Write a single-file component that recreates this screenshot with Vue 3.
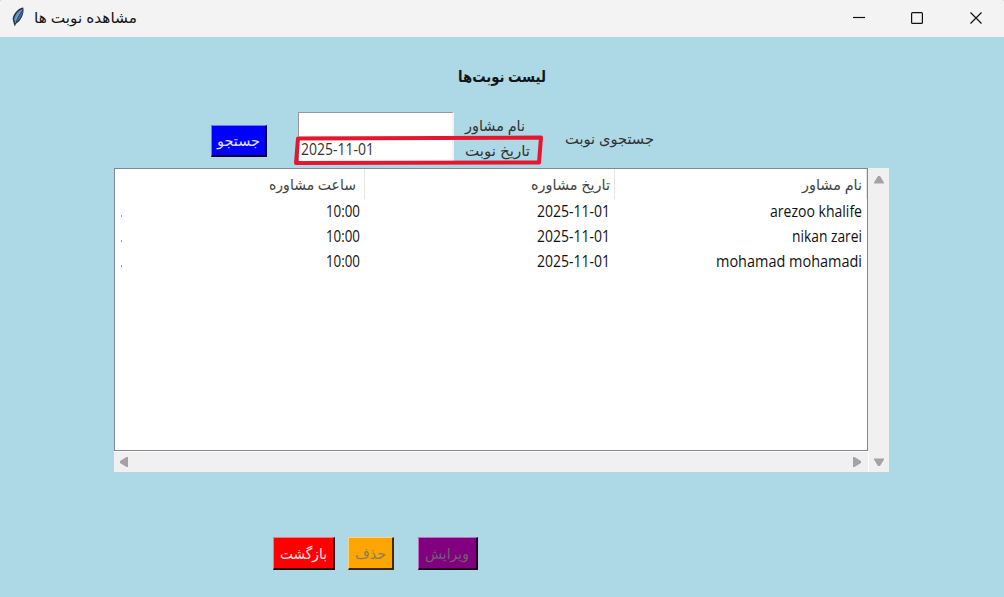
<script setup>
import { h } from 'vue'

// Single-line label fitted to a fixed advance width.
const FitText = (props) =>
  h('svg', { class: ['fit', { latin: props.ltr }], width: props.w, height: 24 }, [
    h('text', {
      x: props.w / 2,
      y: 17,
      'text-anchor': 'middle',
      textLength: props.w,
      lengthAdjust: 'spacingAndGlyphs',
      direction: props.ltr ? 'ltr' : 'rtl'
    }, props.t)
  ])
FitText.props = { t: String, w: Number, ltr: Boolean }

const rows = [
  { time: '10:00', date: '2025-11-01', name: 'arezoo khalife', w: 92 },
  { time: '10:00', date: '2025-11-01', name: 'nikan zarei', w: 70 },
  { time: '10:00', date: '2025-11-01', name: 'mohamad mohamadi', w: 146 }
]
</script>

<template>
  <div class="window">
    <header class="titlebar">
      <svg class="feather" width="14" height="22" viewBox="0 0 14 22">
        <path d="M12.300 .5C8 1 3 5.500 1.600 11.500L2.600 16L3.800 19.500L5 16.700C10 14 13.500 7 12.300 .5Z" fill="#26343f" />
        <path d="M10.800 2.300C7 4 3.800 8 3 12.500L4.200 14.500C6 11 8 7 10.800 2.300Z" fill="#5a93d0" />
        <path d="M11.800 3C11.900 8 9 12.500 5.500 15C6.500 11 9 7 11.800 3Z" fill="#3568a8" />
        <path d="M11.300 2.500C7.500 7 5 12 4.200 16" fill="none" stroke="#a9c8e4" stroke-width=".6" />
      </svg>
      <FitText class="caption" t="مشاهده نوبت ها" :w="103" />
      <svg class="controls" width="140" height="37" viewBox="0 0 140 37" fill="none" stroke="#111" stroke-width="1.200">
        <path d="M1 17.500H13" />
        <rect x="59.600" y="12.600" width="10.800" height="10.800" rx="1" />
        <path d="M118.500 12.500L129.500 23.500M129.500 12.500L118.500 23.500" />
      </svg>
    </header>

    <h1 class="heading"><FitText t="لیست نوبت‌ها" :w="88" /></h1>

    <section class="search">
      <button class="btn blue"><FitText t="جستجو" :w="43" /></button>
      <div class="entries">
        <div class="entry"></div>
        <div class="entry"><FitText t="2025-11-01" :w="73" ltr /></div>
      </div>
      <div class="labels">
        <FitText t="نام مشاور" :w="60" />
        <FitText t="تاریخ نوبت" :w="65" />
      </div>
      <FitText class="search-title" t="جستجوی نوبت" :w="89" />
      <svg class="mark" width="252" height="34" viewBox="0 0 252 34">
        <path d="M6 6.500L249 5.500L247 30.500L4 31Z" fill="none" stroke="#e5172f" stroke-width="4" stroke-linejoin="round" />
      </svg>
    </section>

    <section class="table-frame">
      <div class="table">
        <div class="row head">
          <div class="cell c1"><FitText t="ساعت مشاوره" :w="87" /></div>
          <div class="cell"><FitText t="تاریخ مشاوره" :w="79" /></div>
          <div class="cell"><FitText t="نام مشاور" :w="60" /></div>
        </div>
        <div v-for="r in rows" :key="r.name" class="row">
          <div class="cell"><i class="speck"></i><FitText :t="r.time" :w="34" ltr /></div>
          <div class="cell"><FitText :t="r.date" :w="73" ltr /></div>
          <div class="cell"><FitText :t="r.name" :w="r.w" ltr /></div>
        </div>
      </div>
      <div class="bar vertical">
        <svg width="12" height="10"><path d="M5 1H7L11 7.500V8.500H1V7.500Z" fill="#a3a3a3" /></svg>
        <svg width="12" height="10"><path d="M5 9H7L11 2.500V1.500H1V2.500Z" fill="#a3a3a3" /></svg>
      </div>
      <div class="bar horizontal">
        <svg width="10" height="12"><path d="M1 5V7L7.500 11H9V1H7.500Z" fill="#a3a3a3" /></svg>
        <svg width="10" height="12"><path d="M9 5V7L2.500 11H1V1H2.500Z" fill="#a3a3a3" /></svg>
      </div>
      <div class="corner"></div>
    </section>

    <footer class="actions">
      <button class="btn red"><FitText t="بازگشت" :w="47" /></button>
      <button class="btn orange"><FitText t="حذف" :w="31" /></button>
      <button class="btn purple"><FitText t="ویرایش" :w="44" /></button>
    </footer>
  </div>
</template>

<style>
body { margin: 0; }
.fit { display: block; flex: none; overflow: visible; }
.fit text { fill: currentColor; }
.fit.latin { font-size: 15.5px; }
</style>

<style scoped>
* { box-sizing: border-box; }
.window {
  width: 1004px;
  height: 597px;
  overflow: hidden;
  background: #add8e6;
  color: #151515;
  font: 15px "Open Sans", "Noto Sans", "DejaVu Sans", sans-serif;
}
.titlebar { display: flex; height: 37px; background: #f3f3f3; border-radius: 2px 2px 0 0; }
.feather { margin: 7px 9px 0 11px; }
.caption { margin-top: 6px; }
.controls { margin-left: auto; margin-right: 12px; }
.heading { display: flex; justify-content: center; height: 75px; margin: 0; padding-top: 28px; font-size: 15.5px; font-weight: 700; }
.search { position: relative; display: flex; height: 56px; padding-left: 211px; color: #333; }
.entries { width: 156px; margin-left: 31px; }
.entry { height: 25px; padding: 0 0 0 2px; background: #fff; border: 1px solid #999; border-right: 2px solid #f3f3f3; border-bottom-color: #eee; }
.labels { display: flex; flex-direction: column; gap: 1px; width: 100px; margin: 2px 0 0 11px; }
.search-title { margin-top: 15px; }
.mark { position: absolute; left: 292px; top: 20px; }
.btn {
  display: flex;
  align-items: center;
  justify-content: center;
  height: 33px;
  padding: 1px 1px 0 0;
  border: 1px solid;
  border-right-width: 2px;
  border-bottom-width: 2px;
  font: inherit;
}
.blue { width: 56px; height: 32px; margin-top: 13px; background: #00f; border-color: #7272ff #000030 #000030 #7272ff; color: #e0e0ff; }
.table-frame { display: grid; grid-template-columns: 754px 21px; grid-template-rows: 283px 21px; width: 775px; margin-left: 114px; }
.table { background: #fff; border: 1px solid #828790; overflow: hidden; }
.row { display: grid; grid-template-columns: 250px 250px 252px; height: 25px; color: #111; }
.cell { display: flex; justify-content: flex-end; align-items: flex-start; padding: 1px 5px 0 0; }
.head { height: 30px; color: #444; }
.head .cell { padding: 4px 4px 0 0; border-right: 1px solid #e5e5e5; }
.head .c1 { padding-right: 8px; }
.speck { width: 1px; height: 2px; margin: 15px auto 0 6px; background: #b98a63; }
.bar { display: flex; align-items: center; justify-content: space-between; background: #f0f0f0; }
.vertical { flex-direction: column; padding: 7px 0 0; position: relative; }
.vertical svg:last-child { position: absolute; top: 289px; }
.horizontal { padding: 0 6px 0 5px; border-top: 1px solid #fff; }
.corner { background: #f0f0f0; border-left: 1px solid #fff; }
.vertical svg { z-index: 1; }
.actions { display: flex; padding: 65px 0 0 273px; }
.red { width: 62px; background: #f00; border-color: #ff7474 #300000 #300000 #ff7474; color: #ffe0e0; }
.orange { width: 46px; margin-left: 13px; background: orange; border-color: #ffd27e #402900 #402900 #ffd27e; color: #858062; }
.purple { width: 60px; margin-left: 24px; background: #800080; border-color: #bd70bd #200020 #200020 #bd70bd; color: #6d6070; }
</style>
